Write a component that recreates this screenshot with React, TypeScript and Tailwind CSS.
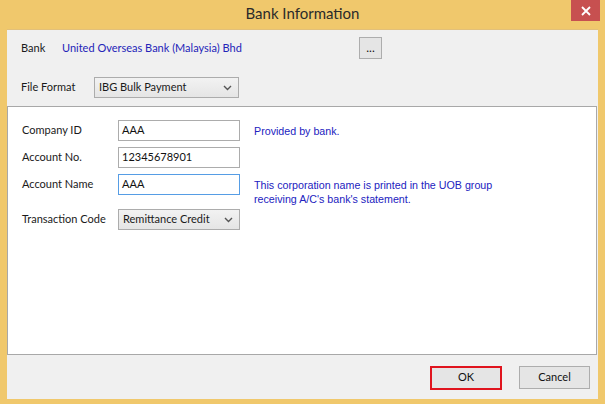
import React from "react";

const ui = { fontFamily: 'Lato, "Noto Sans", sans-serif' };
const hint = { fontFamily: '"Liberation Sans", Arial, sans-serif' };

function Chevron() {
  return (
    <svg width="9" height="6" viewBox="0 0 9 6" className="shrink-0">
      <path d="M1 1 L4.5 4.5 L8 1" fill="none" stroke="#555" strokeWidth="1.4" />
    </svg>
  );
}

function Select({ value, w }: { value: string; w: string }) {
  return (
    <div
      className={`${w} h-[21px] flex items-center justify-between pl-[4px] pr-[6px] border border-[#acacac] bg-gradient-to-b from-[#f2f2f2] to-[#e5e5e5] text-[11px] text-[#1a1a1a] whitespace-nowrap`}
      style={ui}
    >
      <span>{value}</span>
      <Chevron />
    </div>
  );
}

function Input({ value, focused }: { value: string; focused?: boolean }) {
  return (
    <div
      className={`w-[122px] h-[21px] flex items-center pl-[3px] bg-white border text-[11px] text-[#111] ${
        focused ? "border-[#569de5]" : "border-[#acacac]"
      }`}
      style={ui}
    >
      {value}
    </div>
  );
}

function Row({ label, children, hintText }: { label: string; children: React.ReactNode; hintText?: React.ReactNode }) {
  return (
    <div className="flex items-start h-[21px]">
      <div className="w-[96px] h-[21px] flex items-center text-[11px] text-[#1a1a1a] whitespace-nowrap" style={ui}>
        {label}
      </div>
      {children}
      {hintText && (
        <div className="ml-[14px] pt-[4px] text-[10.7px] leading-[14px] text-[#2222c0] whitespace-nowrap" style={hint}>
          {hintText}
        </div>
      )}
    </div>
  );
}

export default function App() {
  return (
    <div className="w-[605px] h-[404px] bg-[#f0c86c] flex flex-col overflow-hidden">
      <div className="h-[29px] relative flex items-center justify-center shrink-0">
        <span className="text-[15px] text-[#2a2a2a] -mt-[2px]" style={ui}>
          Bank Information
        </span>
        <div className="absolute right-[5px] top-0 w-[29px] h-[21px] bg-[#c75050] flex items-center justify-center">
          <svg width="10" height="10" viewBox="0 0 10 10">
            <path d="M1 1 L9 9 M9 1 L1 9" stroke="#fff" strokeWidth="1.8" />
          </svg>
        </div>
      </div>

      <div className="mx-[7px] mb-[5px] flex-1 bg-[#f0f0f0] flex flex-col border-t border-[#e2c07a]">
        <div className="h-[76px] shrink-0 pl-[14px] pt-[7px] flex flex-col">
          <div className="flex items-center h-[22px]">
            <span className="w-[41px] text-[11px] text-[#1a1a1a]" style={ui}>
              Bank
            </span>
            <span className="text-[11px] text-[#2424b8]" style={ui}>
              United Overseas Bank (Malaysia) Bhd
            </span>
            <div className="ml-auto mr-[216px] w-[23px] h-[22px] border border-[#adadad] bg-[#e5e5e5] flex items-center justify-center text-[12px] leading-none pb-[1px] text-[#111]" style={ui}>
              ...
            </div>
          </div>
          <div className="flex items-center mt-[18px]">
            <span className="w-[73px] text-[11px] text-[#1a1a1a]" style={ui}>
              File Format
            </span>
            <Select value="IBG Bulk Payment" w="w-[145px]" />
          </div>
        </div>

        <div className="h-[249px] shrink-0 mr-[1px] bg-white border border-[#a8a8a8] pl-[14px] pt-[13px] flex flex-col">
          <Row label="Company ID" hintText="Provided by bank.">
            <Input value="AAA" />
          </Row>
          <div className="h-[6px] shrink-0" />
          <Row label="Account No.">
            <Input value="12345678901" />
          </Row>
          <div className="h-[6px] shrink-0" />
          <Row
            label="Account Name"
            hintText={
              <>
                This corporation name is printed in the UOB group
                <br />
                receiving A/C's bank's statement.
              </>
            }
          >
            <Input value="AAA" focused />
          </Row>
          <div className="h-[14px] shrink-0" />
          <Row label="Transaction Code">
            <Select value="Remittance Credit" w="w-[122px]" />
          </Row>
        </div>

        <div className="flex-1 flex items-center justify-end pr-[8px] gap-[17px] pt-[1px]">
          <div className="w-[72px] h-[24px] border-2 border-[#e0141e] bg-[#e5e5e5] flex items-center justify-center text-[11px] text-[#111]" style={ui}>
            OK
          </div>
          <div className="w-[71px] h-[23px] border border-[#adadad] bg-[#e5e5e5] flex items-center justify-center text-[11px] text-[#111]" style={ui}>
            Cancel
          </div>
        </div>
      </div>
    </div>
  );
}
